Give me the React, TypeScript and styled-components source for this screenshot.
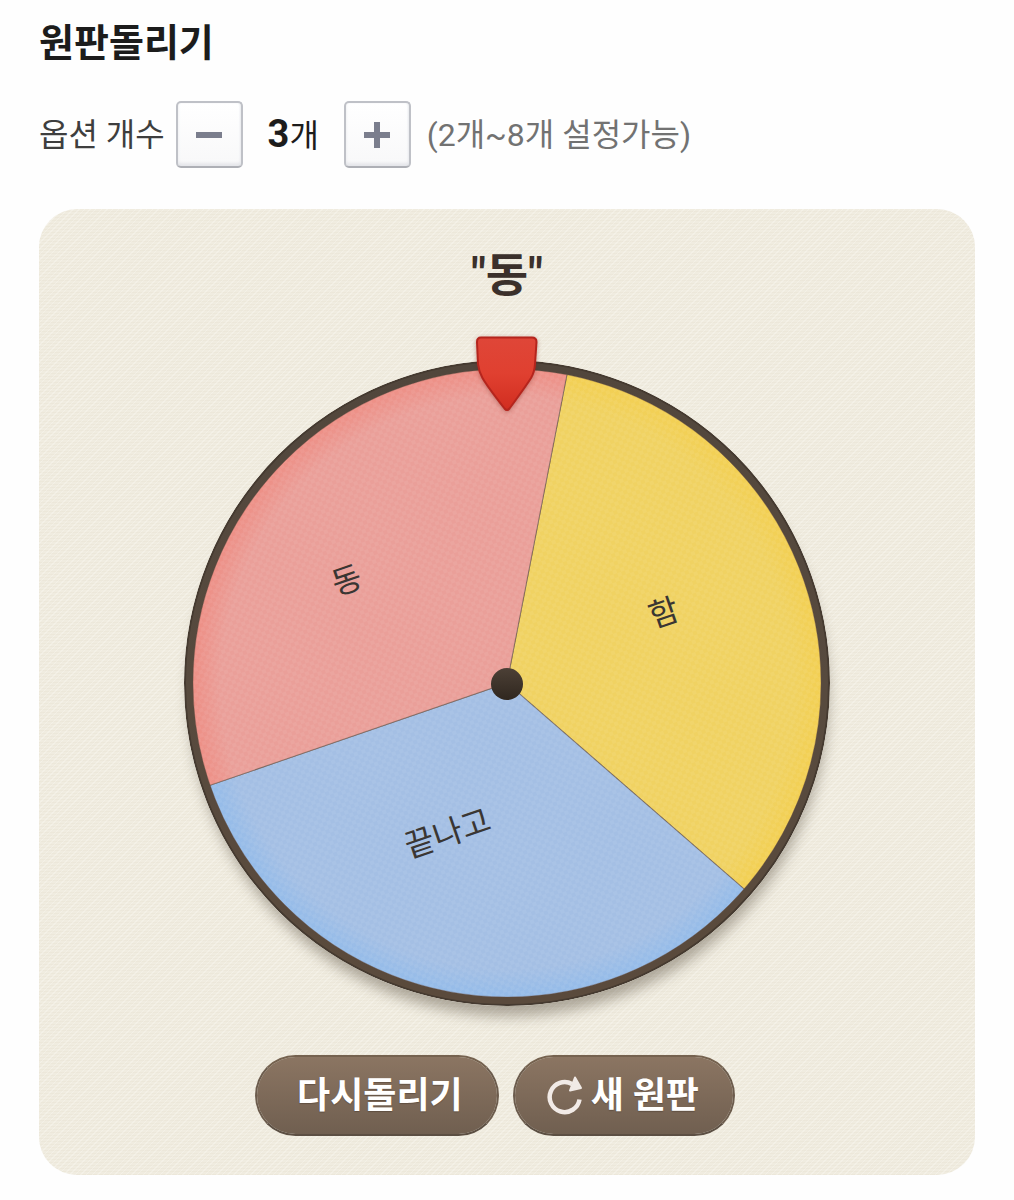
import React, { useId, useState } from "react";
import styled, { createGlobalStyle } from "styled-components";

const FONT = 'Roboto, "Noto Sans CJK KR", sans-serif';
const MIN_OPTIONS = 2;
const MAX_OPTIONS = 8;

const GlobalStyle = createGlobalStyle`
  *, *::before, *::after {
    box-sizing: border-box;
  }
  body {
    margin: 0;
    background: #fefefe;
    font-family: ${FONT};
  }
  button {
    font-family: inherit;
    cursor: pointer;
  }
`;

const Page = styled.main`
  padding: 18px 39px 24px;
`;

const Title = styled.h1`
  margin: 0;
  font-size: 38px;
  line-height: 50px;
  font-weight: 700;
  color: #1c1c1c;
`;

const Controls = styled.div`
  display: flex;
  flex-wrap: wrap;
  align-items: center;
  margin: 33px 0 41px;
  font-size: 32px;
  line-height: 48px;
  color: #3e3e3e;
`;

const ControlLabel = styled.span`
  margin-right: 11px;
`;

const StepButton = styled.button`
  display: flex;
  align-items: center;
  justify-content: center;
  width: 67px;
  height: 67px;
  padding: 0;
  border: 2px solid #bfc1c7;
  border-bottom-color: #aeb0b6;
  border-radius: 5px;
  background: linear-gradient(#ffffff, #f8f8f9);
  box-shadow: inset 0 -3px 3px #e6e7eb, inset -1px 0 2px #eeeff2;
  color: #7b7e8d;
`;

const Count = styled.output`
  min-width: 101px;
  text-align: center;
  color: #1c1c1c;

  strong {
    font-size: 38px;
    font-weight: 700;
  }
`;

const Hint = styled.span`
  margin-left: 16px;
  color: #727272;
`;

const Board = styled.section`
  display: flex;
  flex-direction: column;
  align-items: center;
  padding: 31px 32px 39px;
  border-radius: 38px;
  background-color: #f0ece0;
  background-image:
    repeating-linear-gradient(135deg, rgba(255, 255, 250, 0.28) 0 1px, transparent 1px 4px),
    repeating-linear-gradient(0deg, rgba(190, 175, 140, 0.07) 0 1px, transparent 1px 3px);
`;

const Result = styled.p`
  margin: 0 0 50px;
  font-size: 46px;
  line-height: 70px;
  font-weight: 700;
  color: #3b302b;
`;

const WheelFrame = styled.div`
  position: relative;
  width: 100%;
  max-width: 646px;
  aspect-ratio: 1;
`;

const WheelDrawing = styled.svg`
  display: block;
  width: 100%;
  height: 100%;
  border-radius: 50%;
  box-shadow: 2px 14px 14px -4px rgba(70, 60, 45, 0.4);
`;

const SliceLabel = styled.text`
  font-family: ${FONT};
  font-size: 32px;
  fill: #3a3633;
  text-anchor: middle;
  dominant-baseline: central;
`;

const Pointer = styled.svg`
  position: absolute;
  top: -24px;
  left: 50%;
  width: 62px;
  height: 76px;
  transform: translateX(-50%);
  filter: drop-shadow(0 1px 2px rgba(120, 30, 20, 0.4));
`;

const Actions = styled.div`
  display: flex;
  flex-wrap: wrap;
  justify-content: center;
  gap: 14px;
  margin-top: 49px;
  padding-right: 24px;
`;

const PillButton = styled.button<{ $lead: number }>`
  display: flex;
  align-items: center;
  gap: 8px;
  height: 81px;
  padding: 0 34px 0 ${({ $lead }) => $lead}px;
  border: 2px solid #6c5c4d;
  border-top-color: #75624f;
  border-bottom-color: #5c4f43;
  border-radius: 41px;
  background: linear-gradient(#8b7562, #705f50) padding-box;
  color: #ffffff;
  font-size: 36px;
  line-height: 48px;
  font-weight: 700;
  text-shadow: 0 1px 1px rgba(60, 45, 35, 0.4);
`;

type Option = { name: string; label?: [number, number] };

const OPTIONS: Option[] = [
  { name: "함", label: [171, -15] },
  { name: "끝나고", label: [-105, 123] },
  { name: "동", label: [-118, -149] },
  { name: "넷" },
  { name: "다섯" },
  { name: "여섯" },
  { name: "일곱" },
  { name: "여덟" },
];

const COLORS = [
  ["#f0d262", "#f3cf50"],
  ["#a4bfe4", "#92bbea"],
  ["#ea9f99", "#ee8d83"],
  ["#b5d69a", "#a3d07f"],
  ["#c9b2df", "#b998da"],
  ["#f2bd8b", "#f3ab68"],
  ["#9fd5d0", "#80cec7"],
  ["#e3b6c8", "#e199b6"],
];

const polar = (degrees: number, radius: number): [number, number] => {
  const a = (degrees * Math.PI) / 180;
  return [Math.sin(a) * radius, -Math.cos(a) * radius];
};

const FIRST_EDGE = 30;
const REST_ANGLE = -19;

function Wheel({ count, rotation }: { count: number; rotation: number }) {
  const id = useId().replace(/[^a-z0-9]/gi, "");
  const step = 360 / count;
  const slices = OPTIONS.slice(0, count);
  return (
    <WheelDrawing viewBox="-323 -323 646 646" role="img" aria-label="원판">
      <defs>
        {COLORS.map(([inner, outer], i) => (
          <radialGradient key={i} id={`${id}s${i}`} gradientUnits="userSpaceOnUse" cx="0" cy="0" r="318">
            <stop offset="0.9" stopColor={inner} />
            <stop offset="1" stopColor={outer} />
          </radialGradient>
        ))}
        <linearGradient id={`${id}rim`} x1="0" y1="0" x2="0" y2="1">
          <stop offset="0" stopColor="#51463c" />
          <stop offset="0.5" stopColor="#574a3e" />
          <stop offset="1" stopColor="#5a4a3c" />
        </linearGradient>
        <linearGradient id={`${id}hub`} x1="0" y1="0" x2="0" y2="1">
          <stop offset="0" stopColor="#4c4036" />
          <stop offset="1" stopColor="#30271f" />
        </linearGradient>
        <pattern id={`${id}dots`} width="8" height="8" patternUnits="userSpaceOnUse">
          <rect width="4" height="4" fill="#ffffff" opacity="0.06" />
          <rect x="4" y="4" width="4" height="4" fill="#ffffff" opacity="0.06" />
        </pattern>
      </defs>
      <g transform={`rotate(${rotation})`}>
        {slices.map((option, i) => {
          const from = FIRST_EDGE + i * step;
          const [x1, y1] = polar(from, 317);
          const [x2, y2] = polar(from + step, 317);
          return (
            <path
              key={option.name}
              d={`M0 0L${x1} ${y1}A317 317 0 0 1 ${x2} ${y2}Z`}
              fill={`url(#${id}s${i})`}
              stroke="#655348"
              strokeOpacity="0.65"
            />
          );
        })}
        <circle r="315" fill={`url(#${id}dots)`} />
        {slices.map((option, i) => {
          const [x, y] =
            count === 3 && option.label ? option.label : polar(FIRST_EDGE + (i + 0.5) * step, 180);
          return (
            <SliceLabel key={option.name} x={x} y={y}>
              {option.name}
            </SliceLabel>
          );
        })}
      </g>
      <circle r="318" fill="none" stroke={`url(#${id}rim)`} strokeWidth="8" />
      <circle r="322" fill="none" stroke="#453a30" strokeWidth="2" />
      <circle r="314" fill="none" stroke="#6e5146" strokeOpacity="0.35" />
      <circle cy="1" r="16" fill={`url(#${id}hub)`} />
    </WheelDrawing>
  );
}

function PointerMark() {
  return (
    <Pointer viewBox="0 0 62 76" aria-hidden="true">
      <defs>
        <linearGradient id="pointerFill" x1="0" y1="0" x2="0" y2="1">
          <stop offset="0" stopColor="#df4638" />
          <stop offset="0.5" stopColor="#e04030" />
          <stop offset="1" stopColor="#d12d20" />
        </linearGradient>
      </defs>
      <path
        d="M5 1.500H56Q60.500 1.500 60.500 6L59 28Q58.500 36 55 42Q50 50 33.500 72.500Q31 75.500 28.500 72.500Q11 50 6.500 42Q3 36 2 28L1 6Q1 1.500 5 1.500Z"
        fill="url(#pointerFill)"
        stroke="#b5251d"
        strokeWidth="2"
      />
    </Pointer>
  );
}

function RestartIcon() {
  return (
    <svg width="36" height="39" viewBox="0 0 36 39" aria-hidden="true">
      <path d="M32.500 23.500A15 15 0 1 1 25 8" fill="none" stroke="#f1eae6" strokeWidth="4.500" />
      <path
        d="M28 1.500L34 12L23 14.500Z"
        fill="#f1eae6"
        stroke="#f1eae6"
        strokeWidth="2"
        strokeLinejoin="round"
      />
    </svg>
  );
}

export default function App() {
  const [count, setCount] = useState(3);
  const [rotation, setRotation] = useState(REST_ANGLE);

  const step = 360 / count;
  const pointed = (((-rotation - FIRST_EDGE) % 360) + 360) % 360;
  const winner = OPTIONS[Math.floor(pointed / step) % count];

  return (
    <>
      <GlobalStyle />
      <Page>
        <Title>원판돌리기</Title>
        <Controls role="group" aria-labelledby="option-count">
          <ControlLabel id="option-count">옵션 개수</ControlLabel>
          <StepButton
            type="button"
            aria-label="옵션 줄이기"
            onClick={() => setCount(Math.max(MIN_OPTIONS, count - 1))}
          >
            <svg width="26" height="26" viewBox="0 0 26 26" aria-hidden="true">
              <path d="M0 13H26" stroke="currentColor" strokeWidth="6" />
            </svg>
          </StepButton>
          <Count>
            <strong>{count}</strong>개
          </Count>
          <StepButton
            type="button"
            aria-label="옵션 늘리기"
            onClick={() => setCount(Math.min(MAX_OPTIONS, count + 1))}
          >
            <svg width="26" height="26" viewBox="0 0 26 26" aria-hidden="true">
              <path d="M0 13H26M13 0V26" stroke="currentColor" strokeWidth="6" />
            </svg>
          </StepButton>
          <Hint>(2개~8개 설정가능)</Hint>
        </Controls>
        <Board>
          <Result>"{winner.name}"</Result>
          <WheelFrame>
            <Wheel count={count} rotation={rotation} />
            <PointerMark />
          </WheelFrame>
          <Actions>
            <PillButton type="button" $lead={40} onClick={() => setRotation(Math.random() * 360)}>
              다시돌리기
            </PillButton>
            <PillButton
              type="button"
              $lead={32}
              onClick={() => {
                setCount(3);
                setRotation(REST_ANGLE);
              }}
            >
              <RestartIcon />새 원판
            </PillButton>
          </Actions>
        </Board>
      </Page>
    </>
  );
}
